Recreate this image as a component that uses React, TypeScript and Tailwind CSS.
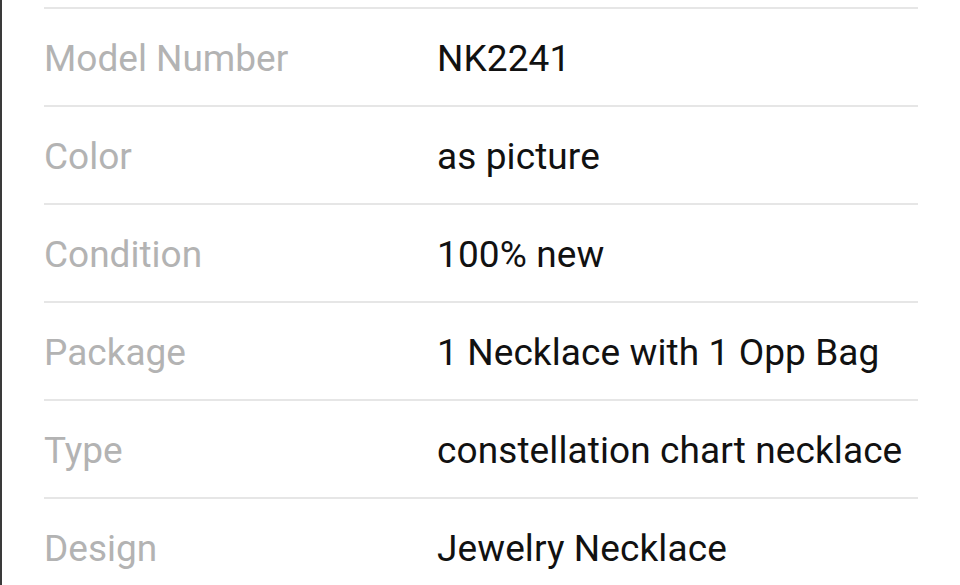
const rows = [
  { label: "Model Number", value: "NK2241" },
  { label: "Color", value: "as picture" },
  { label: "Condition", value: "100% new" },
  { label: "Package", value: "1 Necklace with 1 Opp Bag" },
  { label: "Type", value: "constellation chart necklace" },
  { label: "Design", value: "Jewelry Necklace" },
];

export default function App() {
  return (
    <div
      className="h-[585px] w-[960px] overflow-hidden bg-white border-l-2 border-[#3a3a3a] pt-[7px] pl-[42px]"
      style={{ fontFamily: "Roboto, 'Liberation Sans', sans-serif" }}
    >
      <div className="w-[874px]">
        {rows.map((row) => (
          <div
            key={row.label}
            className="flex h-[98px] items-center border-t-2 border-[#e6e6e6] pt-[3px]"
          >
            <div className="w-[393px] text-[37px] text-[#b3b3b3]">{row.label}</div>
            <div className="text-[37px] tracking-[0.1px] text-[#111111]">{row.value}</div>
          </div>
        ))}
      </div>
    </div>
  );
}
